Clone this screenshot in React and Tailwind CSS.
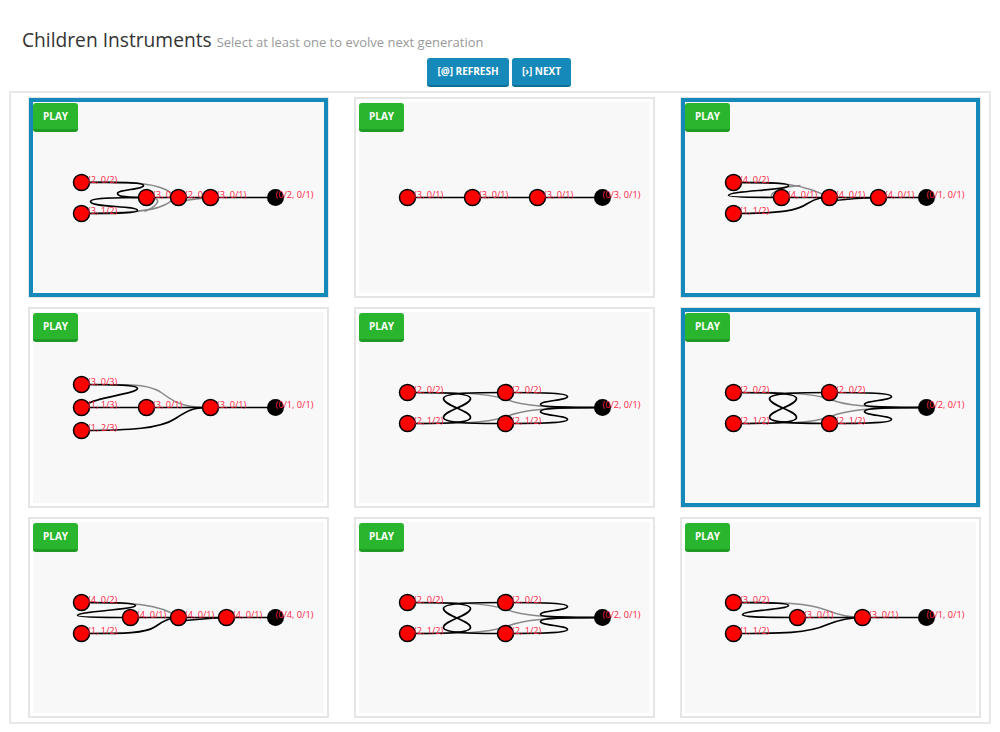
const font = { fontFamily: '"Open Sans", sans-serif' };

// figure-eight between two pairs of nodes, same shape for cards 5, 6 and 8
function crossLinks(mx, bx) {
  const r = mx + 62;
  const b = mx + 35;
  return {
    gray: [
      `M81 182 C130 182 160 182 ${mx + 1} 189 C${mx + 16} 195 ${mx + 36} 197 ${bx} 197`,
      `M81 213 C130 213 160 213 ${mx + 1} 206 C${mx + 16} 200 ${mx + 36} 197 ${bx} 197`,
    ],
    black: [
      "M81 182 C115 182 144 182 144 188 C144 195 117 200 117 207 C117 213 150 213 " + mx + " 213",
      "M81 213 C115 213 144 213 144 207 C144 200 117 195 117 188 C117 182 150 182 " + mx + " 182",
      `M${mx} 182 C${mx + 26} 182 ${r} 182 ${r} 186 C${r} 190 ${b} 190 ${b} 194 C${b} 197 ${b + 26} 197 ${bx} 197`,
      `M${mx} 213 C${mx + 26} 213 ${r} 213 ${r} 209 C${r} 205 ${b} 205 ${b} 201 C${b} 197 ${b + 26} 197 ${bx} 197`,
    ],
  };
}

const graphs = [
  {
    nodes: [[81, 182, "(2, 0/2)"], [81, 213, "(3, 1/2)"], [146, 197, "(3, 0/1)"], [178, 197, "(2, 0/1)"], [210, 197, "(3, 0/1)"]],
    end: [275, "(0/2, 0/1)"],
    gray: [
      "M81 182 C125 181 150 182 165 189 C172 193 175 196 178 197",
      "M81 213 C115 213 150 212 165 204 C172 200 175 198 178 197",
      "M146 197 C168 197 152 208 144 211",
      "M178 201 C190 199 200 198 210 197",
    ],
    black: [
      "M81 182 C105 182 143 181 143 185 C143 189 117 189 117 193 C117 197 130 197 146 197",
      "M81 213 C105 213 137 213 137 210 C137 205 90 207 90 201 C90 197 120 197 146 197",
      "M146 197 H275",
    ],
  },
  {
    nodes: [[81, 197, "(3, 0/1)"], [146, 197, "(3, 0/1)"], [211, 197, "(3, 0/1)"]],
    end: [276, "(0/3, 0/1)"],
    gray: [],
    black: ["M81 197 H276"],
  },
  {
    nodes: [[81, 182, "(4, 0/2)"], [81, 213, "(1, 1/2)"], [129, 197, "(4, 0/1)"], [177, 197, "(4, 0/1)"], [226, 197, "(4, 0/1)"]],
    end: [274, "(0/1, 0/1)"],
    gray: [
      "M81 182 C130 182 150 183 177 197",
      "M125 197 C115 197 118 192 130 188 C136 186 140 186 148 185",
    ],
    black: [
      "M81 182 C105 182 136 182 136 185 C136 190 76 190 76 195 C76 197 110 197 129 197",
      "M81 213 C130 213 145 210 155 203 C165 197 170 197 177 197",
      "M129 197 H274",
      "M177 201 C192 198 205 198 226 197",
    ],
  },
  {
    nodes: [[81, 174, "(3, 0/3)"], [81, 197, "(1, 1/3)"], [81, 220, "(1, 2/3)"], [146, 197, "(3, 0/1)"], [210, 197, "(3, 0/1)"]],
    end: [275, "(0/1, 0/1)"],
    gray: ["M81 174 C130 174 150 172 165 185 C178 195 190 197 210 197"],
    black: [
      "M81 174 C110 174 137 174 137 178 C137 183 95 187 88 193",
      "M81 197 H275",
      "M81 220 C130 220 160 218 175 208 C190 198 195 197 210 197",
    ],
  },
  {
    nodes: [[81, 182, "(2, 0/2)"], [81, 213, "(2, 1/2)"], [179, 182, "(2, 0/2)"], [179, 213, "(2, 1/2)"]],
    end: [276, "(0/2, 0/1)"],
    ...crossLinks(179, 276),
  },
  {
    nodes: [[81, 182, "(2, 0/2)"], [81, 213, "(2, 1/2)"], [177, 182, "(2, 0/2)"], [177, 213, "(2, 1/2)"]],
    end: [274, "(0/2, 0/1)"],
    ...crossLinks(177, 274),
  },
  {
    nodes: [[81, 182, "(4, 0/2)"], [81, 213, "(1, 1/2)"], [130, 197, "(4, 0/1)"], [178, 197, "(4, 0/1)"], [226, 197, "(4, 0/1)"]],
    end: [275, "(0/4, 0/1)"],
    gray: ["M81 182 C130 182 160 183 178 197"],
    black: [
      "M81 182 C105 182 135 182 135 185 C135 189 77 191 77 195 C77 197 110 197 130 197",
      "M81 213 C125 213 145 213 155 206 C163 200 170 197 178 197",
      "M130 197 H275",
      "M178 201 C192 199 205 198 226 197",
    ],
  },
  {
    nodes: [[81, 182, "(2, 0/2)"], [81, 213, "(2, 1/2)"], [179, 182, "(2, 0/2)"], [179, 213, "(2, 1/2)"]],
    end: [276, "(0/2, 0/1)"],
    ...crossLinks(179, 276),
  },
  {
    nodes: [[81, 182, "(3, 0/2)"], [81, 213, "(1, 1/2)"], [145, 197, "(3, 0/1)"], [210, 197, "(3, 0/1)"]],
    end: [274, "(0/1, 0/1)"],
    gray: ["M81 182 C130 182 155 182 175 190 C190 196 200 197 210 197"],
    black: [
      "M81 182 C105 182 136 182 136 185 C136 189 90 190 90 194 C90 197 115 197 145 197",
      "M81 213 C130 213 155 213 175 204 C190 198 200 197 210 197",
      "M145 197 H274",
    ],
  },
];

const selected = [0, 2, 5];

function Graph({ graph, className }) {
  return (
    <svg viewBox="27.5 96.5 301 201" className={className}>
      {graph.gray.map((d, i) => (
        <path key={i} d={d} fill="none" stroke="#888888" strokeWidth="1.5" />
      ))}
      {graph.black.map((d, i) => (
        <path key={i} d={d} fill="none" stroke="#000000" strokeWidth="1.7" />
      ))}
      {graph.nodes.map(([x, y, label], i) => (
        <g key={i}>
          <circle cx={x} cy={y} r="8" fill="#ff0000" stroke="#000000" strokeWidth="1.5" />
          <text x={x + 6.5} y={y + 0.5} fontSize="9.2" fill="#ff2040" style={font}>{label}</text>
        </g>
      ))}
      <circle cx={graph.end[0]} cy="197" r="8.5" fill="#000000" />
      <text x={graph.end[0]} y="197.5" fontSize="9.2" fill="#ff2040" style={font}>{graph.end[1]}</text>
    </svg>
  );
}

function Card({ graph, isSelected }) {
  if (isSelected) {
    return (
      <div className="relative h-[201px] border border-[#e5e5e5] bg-white">
        <div className="h-full bg-[#f8f8f8] border-4 border-[#1589b9]" />
        <Graph graph={graph} className="absolute left-[-1px] top-[-1px] w-[301px] h-[201px]" />
        <button className="absolute left-[4px] top-[5px] w-[45px] h-[29px] rounded-[3px] bg-[#2ab52e] border-b-[3px] border-[#1f9a24] text-white text-[10px] font-bold">
          PLAY
        </button>
      </div>
    );
  }
  return (
    <div className="relative h-[201px] border-2 border-[#e5e5e5] bg-white p-[3px]">
      <div className="h-full bg-[#f8f8f8]" />
      <Graph graph={graph} className="absolute left-[-2px] top-[-2px] w-[301px] h-[201px]" />
      <button className="absolute left-[3px] top-[4px] w-[45px] h-[29px] rounded-[3px] bg-[#2ab52e] border-b-[3px] border-[#1f9a24] text-white text-[10px] font-bold">
        PLAY
      </button>
    </div>
  );
}

export default function App() {
  return (
    <div className="bg-white min-h-screen" style={font}>
      <div className="pl-[22px] pt-[26px] flex items-baseline gap-[5px] h-[58px]">
        <h1 className="text-[19.2px] leading-[28px] font-normal text-[#333333]">Children Instruments</h1>
        <span className="text-[13px] text-[#999999]">Select at least one to evolve next generation</span>
      </div>
      <div className="flex justify-center gap-[3px] pr-[2px]">
        <button className="w-[82px] h-[29px] rounded-[3px] bg-[#1589b9] border-b-2 border-[#0f6f96] text-white text-[10px] font-bold">[@] REFRESH</button>
        <button className="w-[59px] h-[29px] rounded-[3px] bg-[#1589b9] border-b-2 border-[#0f6f96] text-white text-[10px] font-bold">[›] NEXT</button>
      </div>
      <div className="mx-[9px] mt-[4px] h-[633px] border-2 border-[#e8e8e8] pl-[17px] pt-[4px]">
        <div className="grid grid-cols-[301px_301px_301px] gap-x-[25px] gap-y-[9px]">
          {graphs.map((graph, i) => (
            <Card key={i} graph={graph} isSelected={selected.includes(i)} />
          ))}
        </div>
      </div>
    </div>
  );
}
